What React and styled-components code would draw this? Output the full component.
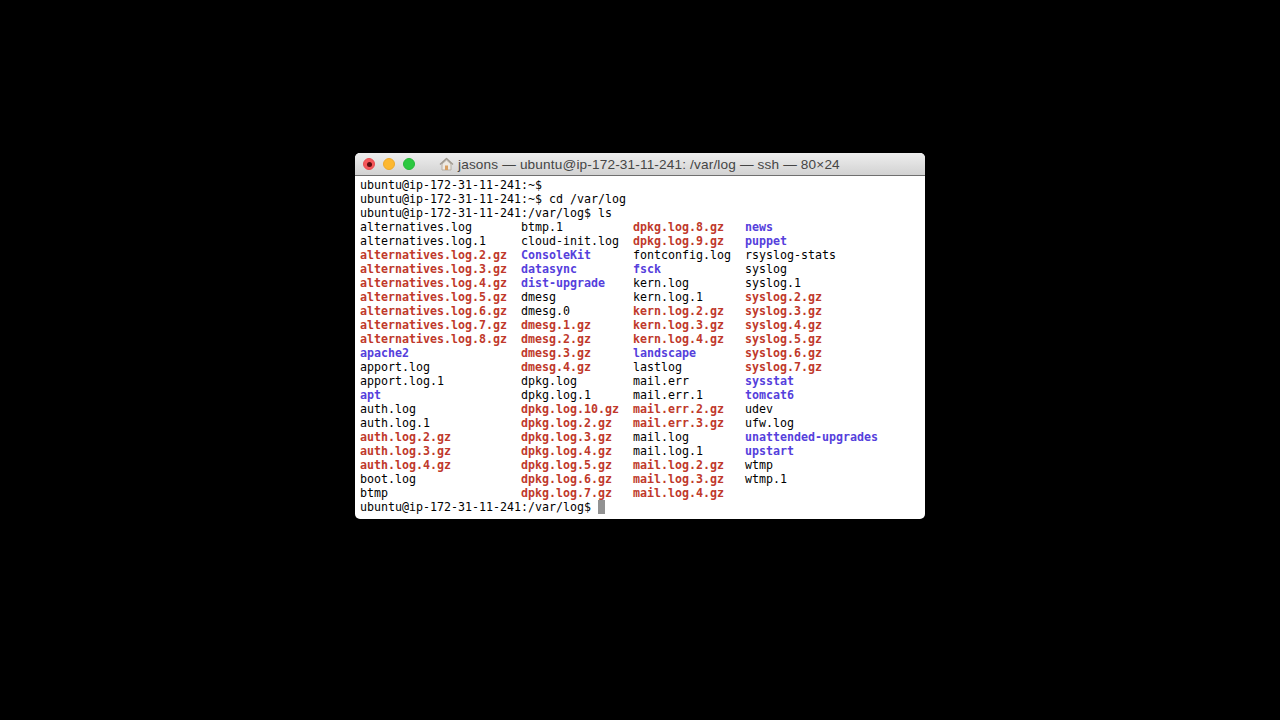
import React from "react";
import styled, { createGlobalStyle } from "styled-components";

const Global = createGlobalStyle`
  html, body { margin: 0; padding: 0; background: #000; height: 100%; }
  #root { height: 100%; }
`;

const Stage = styled.div`
  width: 1280px;
  height: 720px;
  background: #000;
  display: flex;
  justify-content: center;
  padding-top: 153px;
  box-sizing: border-box;
`;

const Win = styled.div`
  width: 570px;
  height: 366px;
  background: #fff;
  border-radius: 5px;
  overflow: hidden;
  display: flex;
  flex-direction: column;
`;

const TitleBar = styled.div`
  height: 22px;
  flex: none;
  display: flex;
  align-items: center;
  padding-left: 8px;
  background: linear-gradient(#eeeeee, #d2d2d2);
  border-bottom: 1px solid #6f6f6f;
`;

const Light = styled.span`
  width: 12px;
  height: 12px;
  border-radius: 50%;
  margin-right: 8px;
  box-sizing: border-box;
  background: ${(p) => p.$bg};
  border: 1px solid ${(p) => p.$edge};
  display: flex;
  align-items: center;
  justify-content: center;
`;

const CloseDot = styled.span`
  width: 5px;
  height: 5px;
  border-radius: 50%;
  background: #5c0c10;
`;

const Title = styled.div`
  margin-left: 16px;
  display: flex;
  align-items: center;
  gap: 4px;
  font: 13.6px "Liberation Sans", Arial, sans-serif;
  letter-spacing: 0.16px;
  color: #454545;
  white-space: nowrap;
`;

const Term = styled.div`
  padding: 2px 0 0 5px;
  font: 11.63px/14px "DejaVu Sans Mono", monospace;
  color: #000;
  white-space: pre;
`;

const Line = styled.div`
  height: 14px;
`;

const Listing = styled.div`
  display: grid;
  grid-template-columns: 161px 112px 112px 1fr;
  grid-template-rows: repeat(20, 14px);
  grid-auto-flow: column;
`;

const kinds = {
  f: "#000",
  a: "#c0392b",
  d: "#5540dc",
};

const Entry = styled.span`
  color: ${(p) => kinds[p.$kind]};
  font-weight: ${(p) => (p.$kind === "f" ? 400 : 700)};
`;

const Cursor = styled.span`
  display: inline-block;
  width: 7px;
  height: 14px;
  background: #929292;
  vertical-align: top;
`;

const files = [
  "f alternatives.log", "f alternatives.log.1", "a alternatives.log.2.gz", "a alternatives.log.3.gz",
  "a alternatives.log.4.gz", "a alternatives.log.5.gz", "a alternatives.log.6.gz", "a alternatives.log.7.gz",
  "a alternatives.log.8.gz", "d apache2", "f apport.log", "f apport.log.1", "d apt", "f auth.log", "f auth.log.1",
  "a auth.log.2.gz", "a auth.log.3.gz", "a auth.log.4.gz", "f boot.log", "f btmp",
  "f btmp.1", "f cloud-init.log", "d ConsoleKit", "d datasync", "d dist-upgrade", "f dmesg", "f dmesg.0",
  "a dmesg.1.gz", "a dmesg.2.gz", "a dmesg.3.gz", "a dmesg.4.gz", "f dpkg.log", "f dpkg.log.1", "a dpkg.log.10.gz",
  "a dpkg.log.2.gz", "a dpkg.log.3.gz", "a dpkg.log.4.gz", "a dpkg.log.5.gz", "a dpkg.log.6.gz", "a dpkg.log.7.gz",
  "a dpkg.log.8.gz", "a dpkg.log.9.gz", "f fontconfig.log", "d fsck", "f kern.log", "f kern.log.1", "a kern.log.2.gz",
  "a kern.log.3.gz", "a kern.log.4.gz", "d landscape", "f lastlog", "f mail.err", "f mail.err.1", "a mail.err.2.gz",
  "a mail.err.3.gz", "f mail.log", "f mail.log.1", "a mail.log.2.gz", "a mail.log.3.gz", "a mail.log.4.gz",
  "d news", "d puppet", "f rsyslog-stats", "f syslog", "f syslog.1", "a syslog.2.gz", "a syslog.3.gz", "a syslog.4.gz",
  "a syslog.5.gz", "a syslog.6.gz", "a syslog.7.gz", "d sysstat", "d tomcat6", "f udev", "f ufw.log",
  "d unattended-upgrades", "d upstart", "f wtmp", "f wtmp.1",
];

const HomeIcon = () => (
  <svg width="15" height="14" viewBox="0 0 15 14">
    <path d="M3 7 L3 13 L12 13 L12 7 L7.5 3 Z" fill="#eeeae2" stroke="#b4aea4" strokeWidth="1" />
    <path d="M1 7.5 L7.5 1.5 L14 7.5" fill="none" stroke="#a09a90" strokeWidth="1.4" strokeLinejoin="round" />
    <rect x="6" y="8.5" width="3" height="4.5" fill="#d8a062" />
  </svg>
);

export default function App() {
  return (
    <Stage>
      <Global />
      <Win>
        <TitleBar>
          <Light $bg="#f6575a" $edge="#e74c50"><CloseDot /></Light>
          <Light $bg="#fdb830" $edge="#eda92a" />
          <Light $bg="#2cc840" $edge="#26b838" />
          <Title>
            <HomeIcon />
            jasons — ubuntu@ip-172-31-11-241: /var/log — ssh — 80×24
          </Title>
        </TitleBar>
        <Term>
          <Line>ubuntu@ip-172-31-11-241:~$</Line>
          <Line>ubuntu@ip-172-31-11-241:~$ cd /var/log</Line>
          <Line>ubuntu@ip-172-31-11-241:/var/log$ ls</Line>
          <Listing>
            {files.map((f) => (
              <Entry key={f} $kind={f[0]}>{f.slice(2)}</Entry>
            ))}
          </Listing>
          <Line>ubuntu@ip-172-31-11-241:/var/log$ <Cursor /></Line>
        </Term>
      </Win>
    </Stage>
  );
}
